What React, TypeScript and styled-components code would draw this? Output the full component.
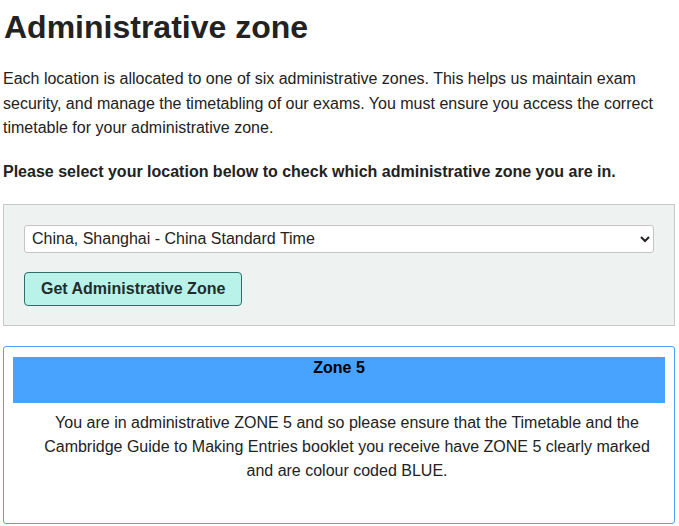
import React, { useState } from 'react';
import styled, { createGlobalStyle } from 'styled-components';

const GlobalStyle = createGlobalStyle`
  body {
    margin: 0;
    background: #fff;
    font-family: "Liberation Sans", Arial, sans-serif;
    color: #222;
  }
`;

const Page = styled.div`
  padding: 0 4px 0 3px;
`;

const Title = styled.h1`
  font-size: 32px;
  font-weight: bold;
  margin: 8px 0 21px;
  line-height: 38px;
  padding-left: 1px;
`;

const Intro = styled.p`
  font-size: 16px;
  line-height: 24.5px;
  margin: 0 0 19px;
`;

const Prompt = styled.p`
  font-size: 16px;
  font-weight: bold;
  line-height: 24px;
  margin: 0 0 20px;
`;

const Panel = styled.div`
  background: #eef3f2;
  border: 1px solid #c8c8c8;
  padding: 20px 20px 19px;
  display: flex;
  flex-direction: column;
  align-items: flex-start;
  gap: 19px;
`;

const Select = styled.select`
  width: 100%;
  height: 28px;
  font-family: "Liberation Sans", Arial, sans-serif;
  font-size: 16px;
  color: #222;
  background: #fff;
  border: 1px solid #c4c4c4;
  border-radius: 3px;
  padding: 0 3px;
`;

const ZoneButton = styled.button`
  font-family: "Liberation Sans", Arial, sans-serif;
  font-size: 16px;
  font-weight: bold;
  color: #1f2d2d;
  background: #b8f2e8;
  border: 1px solid #2f6e68;
  border-radius: 4px;
  height: 34px;
  padding: 0 16px;
  cursor: pointer;
`;

const Result = styled.div`
  margin-top: 20px;
  border: 1px solid #4da3ff;
  border-radius: 3px;
  padding: 10px 9px 0;
  height: 166px;
`;

const ZoneHeader = styled.div<{ colour: string }>`
  background: ${(p) => p.colour};
  height: 44px;
  text-align: center;
  font-size: 16px;
  font-weight: bold;
  color: #000;
  padding-top: 2px;
  line-height: 18px;
`;

const ZoneText = styled.p`
  font-size: 16px;
  line-height: 24px;
  text-align: center;
  margin: 8px 10px 0 26px;
`;

const locations = [
  'China, Shanghai - China Standard Time',
  'China, Beijing - China Standard Time',
  'Hong Kong - Hong Kong Time',
];

export default function App() {
  const [location, setLocation] = useState(locations[0]);

  return (
    <Page>
      <GlobalStyle />
      <Title>Administrative zone</Title>
      <Intro>
        Each location is allocated to one of six administrative zones. This helps us maintain exam
        security, and manage the timetabling of our exams. You must ensure you access the correct
        timetable for your administrative zone.
      </Intro>
      <Prompt>Please select your location below to check which administrative zone you are in.</Prompt>
      <Panel>
        <Select value={location} onChange={(e) => setLocation(e.target.value)}>
          {locations.map((l) => (
            <option key={l}>{l}</option>
          ))}
        </Select>
        <ZoneButton>Get Administrative Zone</ZoneButton>
      </Panel>
      <Result>
        <ZoneHeader colour="#47a3ff">Zone 5</ZoneHeader>
        <ZoneText>
          You are in administrative ZONE 5 and so please ensure that the Timetable and the Cambridge
          Guide to Making Entries booklet you receive have ZONE 5 clearly marked and are colour coded
          BLUE.
        </ZoneText>
      </Result>
    </Page>
  );
}
